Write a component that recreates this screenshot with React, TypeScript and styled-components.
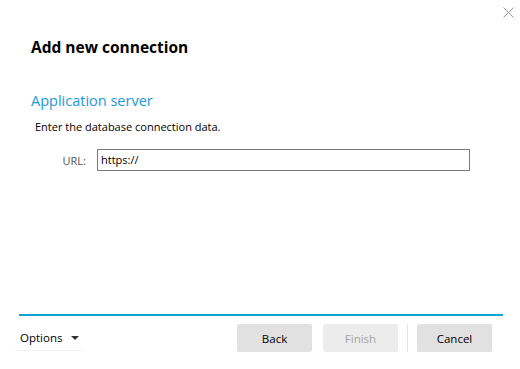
import React from "react";
import styled, { createGlobalStyle } from "styled-components";

const Global = createGlobalStyle`
  html, body { margin: 0; padding: 0; background: #fff; }
  body { font-family: "Open Sans", "Noto Sans", sans-serif; }
  * { box-sizing: border-box; }
`;

const Dialog = styled.div`
  position: relative;
  width: 520px;
  height: 369px;
  background: #fff;
  display: flex;
  flex-direction: column;
`;

const CloseButton = styled.button`
  position: absolute;
  top: 6px;
  right: 6px;
  width: 12px;
  height: 12px;
  padding: 0;
  border: none;
  background: transparent;
  display: flex;
  align-items: center;
  justify-content: center;
`;

const Title = styled.h1`
  margin: 37px 0 0 31px;
  font-size: 15.5px;
  line-height: 20px;
  font-weight: 700;
  color: #000;
`;

const Body = styled.div`
  flex: 1;
  display: flex;
  flex-direction: column;
  padding: 0 0 0 31px;
`;

const SectionHeading = styled.h2`
  margin: 34px 0 0 0;
  font-size: 14.5px;
  line-height: 20px;
  font-weight: 400;
  color: #1c9ad6;
`;

const Description = styled.p`
  margin: 8px 0 0 4px;
  font-size: 11px;
  line-height: 16px;
  color: #000;
`;

const FieldRow = styled.div`
  margin-top: 14px;
  display: flex;
  align-items: center;
`;

const FieldLabel = styled.label`
  width: 66px;
  padding-right: 11px;
  text-align: right;
  font-size: 11px;
  color: #555;
`;

const TextInput = styled.input`
  width: 373px;
  height: 22px;
  border: 1px solid #7a7a7a;
  padding: 0 3px 2px;
  font-family: inherit;
  font-size: 11px;
  color: #000;
  outline: none;
`;

const Footer = styled.div`
  margin: 0 17px 0 19px;
  border-top: 2px solid #12a3d3;
  height: 55px;
  display: flex;
  align-items: flex-start;
  padding: 8px 11px 0 0;
`;

const OptionsButton = styled.button`
  margin: 1px 0 0 -4px;
  height: 26px;
  padding: 0 5px 0 5px;
  border: none;
  border-bottom: 1px solid #f3f3f3;
  background: transparent;
  display: flex;
  align-items: center;
  gap: 9px;
  font-family: inherit;
  font-size: 11.5px;
  color: #000;
`;

const Spacer = styled.div`
  flex: 1;
`;

const Button = styled.button<{ $disabled?: boolean }>`
  width: 75px;
  height: 28px;
  border: none;
  border-radius: 2px;
  background: ${(p) => (p.$disabled ? "#ececec" : "#e1e1e1")};
  color: ${(p) => (p.$disabled ? "#a3a3a3" : "#000")};
  font-family: inherit;
  font-size: 11.5px;
`;

const ButtonGroup = styled.div`
  display: flex;
  align-items: center;
  gap: 11px;
`;

const Separator = styled.div`
  width: 1px;
  height: 28px;
  margin: 0 -2px;
  background: #e4e4e4;
`;

export default function App() {
  return (
    <>
      <Global />
      <Dialog>
        <CloseButton aria-label="Close">
          <svg width="11" height="11" viewBox="0 0 11 11">
            <path d="M0.5 0.5 L10.5 10.5 M10.5 0.5 L0.5 10.5" stroke="#9a9a9a" strokeWidth="1" />
          </svg>
        </CloseButton>
        <Title>Add new connection</Title>
        <Body>
          <SectionHeading>Application server</SectionHeading>
          <Description>Enter the database connection data.</Description>
          <FieldRow>
            <FieldLabel htmlFor="url">URL:</FieldLabel>
            <TextInput id="url" defaultValue="https://" />
          </FieldRow>
        </Body>
        <Footer>
          <OptionsButton>
            Options
            <svg width="8" height="4" viewBox="0 0 8 4">
              <path d="M0 0 L8 0 L4 4 Z" fill="#333" />
            </svg>
          </OptionsButton>
          <Spacer />
          <ButtonGroup>
            <Button>Back</Button>
            <Button $disabled>Finish</Button>
            <Separator />
            <Button>Cancel</Button>
          </ButtonGroup>
        </Footer>
      </Dialog>
    </>
  );
}
